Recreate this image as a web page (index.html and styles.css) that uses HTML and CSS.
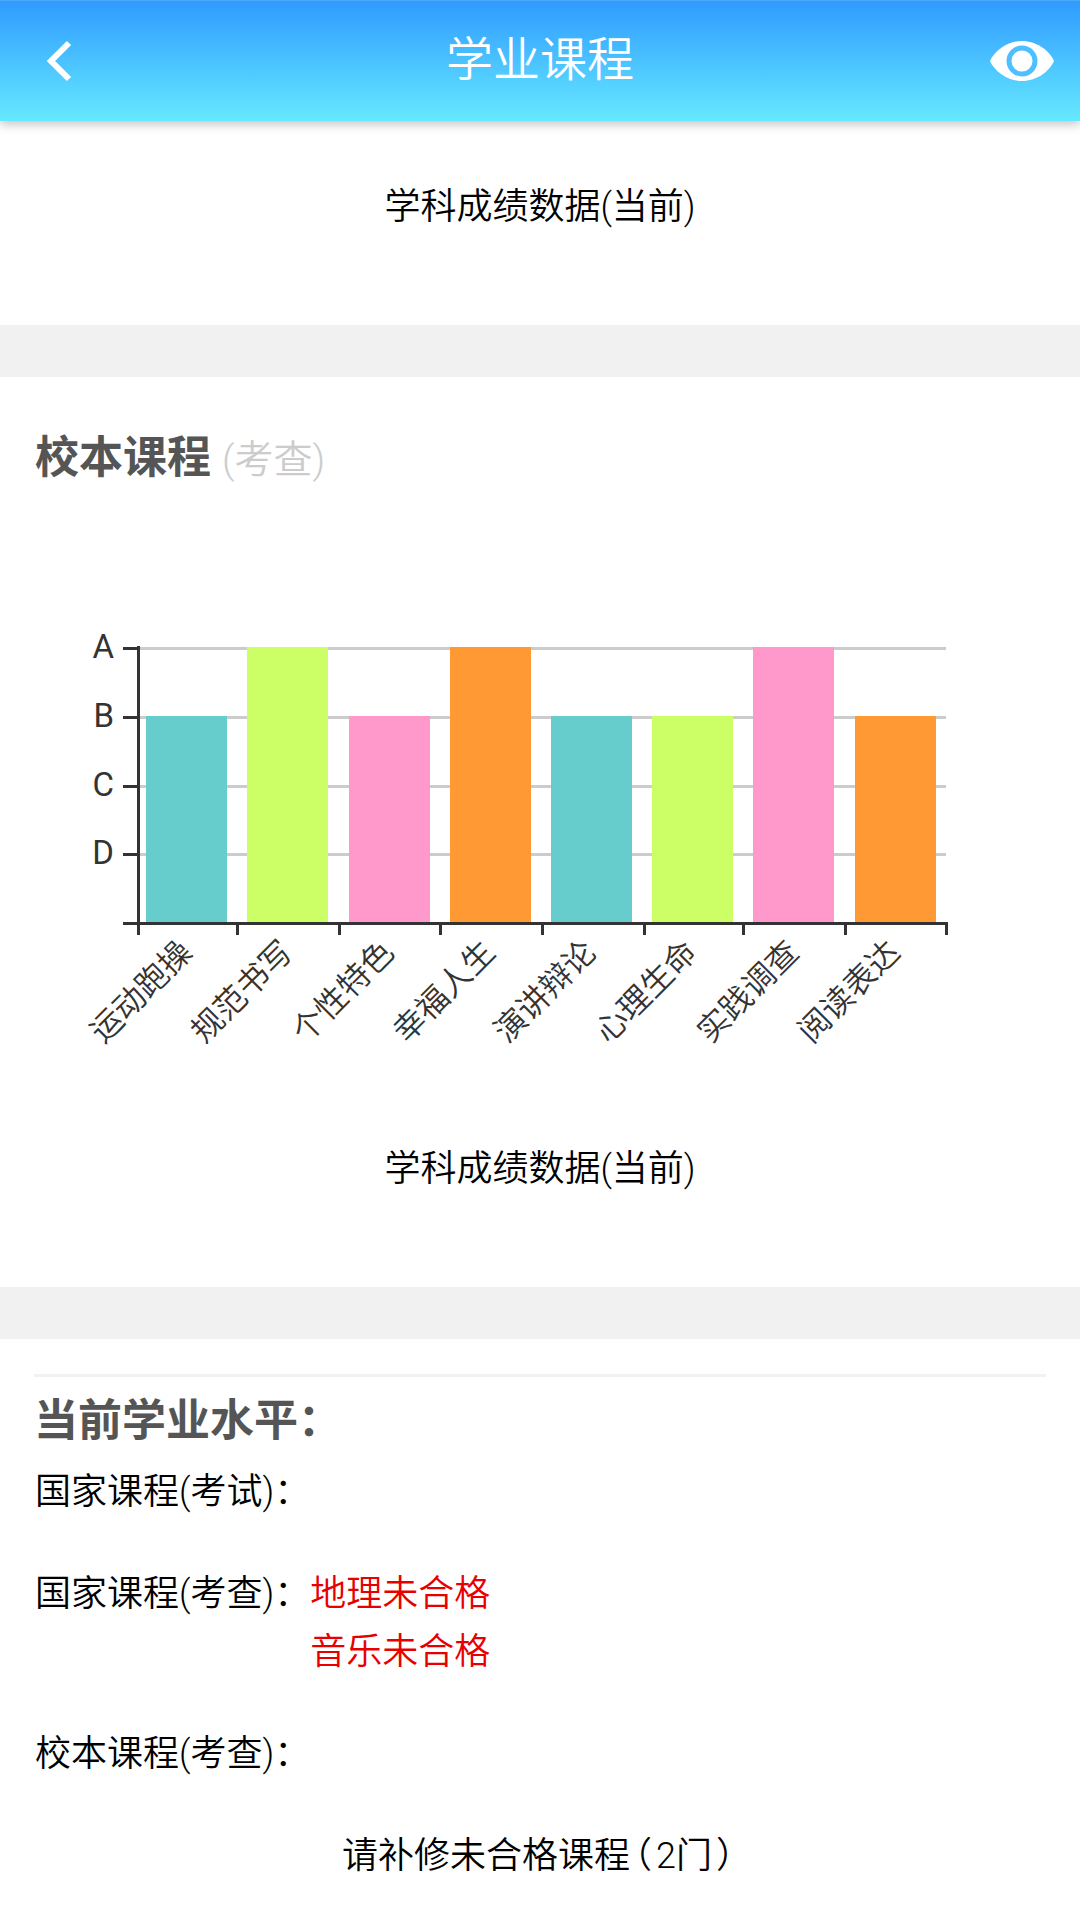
FILE: index.html
```html
<!DOCTYPE html>
<html lang="zh-CN">
<head>
    <meta charset="UTF-8">
    <meta name="viewport" content="width=device-width, initial-scale=1.0">
    <title>学业课程</title>
    <link rel="stylesheet" href="styles.css">
</head>
<body>

    <!-- 顶部导航 -->
    <header class="navbar">
        <button class="nav-btn back" type="button" aria-label="返回">
            <svg width="26" height="42" viewBox="0 0 26 42">
                <path d="M23 3L5 21l18 18" fill="none" stroke="#fff" stroke-width="6"/>
            </svg>
        </button>
        <h1>学业课程</h1>
        <button class="nav-btn eye" type="button" aria-label="查看">
            <svg width="64" height="40" viewBox="0 0 64 40">
                <path d="M0 20C5 9 18 0 32 0s27 9 32 20c-5 11-18 20-32 20S5 31 0 20z" fill="#fff"/>
                <circle cx="32" cy="20" r="13" fill="none" stroke="#4fc0ff" stroke-width="5"/>
            </svg>
        </button>
    </header>

    <section class="card">
        <p class="caption">学科成绩数据(当前)</p>
    </section>

    <!-- 校本课程 -->
    <section class="card">
        <h2 class="card-title">校本课程 <small>(考查)</small></h2>
        <svg class="chart" viewBox="0 0 1080 594" role="img" aria-label="校本课程成绩">
            <g class="grid">
                <rect x="138" y="158" width="808" height="3"/>
                <rect x="138" y="227" width="808" height="3"/>
                <rect x="138" y="296" width="808" height="3"/>
                <rect x="138" y="364" width="808" height="3"/>
            </g>
            <g class="bars">
                <rect class="teal" x="146" y="227" width="81" height="207"/>
                <rect class="lime" x="247" y="158" width="81" height="276"/>
                <rect class="pink" x="349" y="227" width="81" height="207"/>
                <rect class="orange" x="450" y="158" width="81" height="276"/>
                <rect class="teal" x="551" y="227" width="81" height="207"/>
                <rect class="lime" x="652" y="227" width="81" height="207"/>
                <rect class="pink" x="753" y="158" width="81" height="276"/>
                <rect class="orange" x="855" y="227" width="81" height="207"/>
            </g>
            <g class="axis">
                <rect x="137" y="157" width="3" height="289"/>
                <rect x="123" y="433" width="825" height="3"/>
                <rect x="123" y="158" width="14" height="3"/>
                <rect x="123" y="227" width="14" height="3"/>
                <rect x="123" y="296" width="14" height="3"/>
                <rect x="123" y="364" width="14" height="3"/>
                <rect x="236" y="435" width="3" height="11"/>
                <rect x="338" y="435" width="3" height="11"/>
                <rect x="439" y="435" width="3" height="11"/>
                <rect x="541" y="435" width="3" height="11"/>
                <rect x="643" y="435" width="3" height="11"/>
                <rect x="742" y="435" width="3" height="11"/>
                <rect x="844" y="435" width="3" height="11"/>
                <rect x="945" y="435" width="3" height="11"/>
            </g>
            <g class="y-labels">
                <text x="114" y="169">A</text>
                <text x="114" y="238">B</text>
                <text x="114" y="307">C</text>
                <text x="114" y="375">D</text>
            </g>
            <g class="x-labels">
                <text transform="translate(194 465) rotate(-45)">运动跑操</text>
                <text transform="translate(295 465) rotate(-45)">规范书写</text>
                <text transform="translate(396 465) rotate(-45)">个性特色</text>
                <text transform="translate(497 465) rotate(-45)">幸福人生</text>
                <text transform="translate(598 465) rotate(-45)">演讲辩论</text>
                <text transform="translate(699 465) rotate(-45)">心理生命</text>
                <text transform="translate(801 465) rotate(-45)">实践调查</text>
                <text transform="translate(902 465) rotate(-45)">阅读表达</text>
            </g>
        </svg>
        <p class="caption">学科成绩数据(当前)</p>
    </section>

    <!-- 当前学业水平 -->
    <section class="level">
        <h2>当前学业水平：</h2>
        <dl>
            <div class="row">
                <dt>国家课程(考试)：</dt>
            </div>
            <div class="row">
                <dt>国家课程(考查)：</dt>
                <dd>地理未合格<br>音乐未合格</dd>
            </div>
            <div class="row">
                <dt>校本课程(考查)：</dt>
            </div>
        </dl>
        <p class="notice">请补修未合格课程<span class="paren">（</span>2门<span class="paren">）</span></p>
    </section>

</body>
</html>
```
FILE: styles.css
```css
* {
    box-sizing: border-box;
}
body {
    margin: 0;
    background: #fff;
    color: #000;
    font-family: Roboto, "Noto Sans CJK SC", sans-serif;
    font-size: 36px;
    font-weight: 350;
}
h1, h2, p, dl, dd {
    margin: 0;
}

/* 顶部导航 */
.navbar {
    display: flex;
    justify-content: space-between;
    align-items: center;
    height: 121px;
    padding: 0 26px 0 46px;
    border-top: 1px solid #4ba9fa;
    background: linear-gradient(#2f9bff, #66e9ff);
    box-shadow: 0 3px 10px rgba(0, 0, 0, 0.25);
}
.navbar h1 {
    color: #fff;
    font-size: 47px;
    font-weight: 350;
    line-height: 60px;
    padding-bottom: 2px;
}
.nav-btn {
    display: flex;
    width: 64px;
    padding: 0;
    border: none;
    background: none;
    cursor: pointer;
}
.navbar .back {
    width: 44px;
}

/* 卡片 */
.card {
    border-bottom: 52px solid #f1f1f1;
}
.caption {
    padding: 62px 0 94px;
    line-height: 48px;
    text-align: center;
}
.card-title {
    padding: 52px 35px 0;
    color: #555;
    font-size: 44px;
    font-weight: 700;
    line-height: 58px;
}
.card-title small {
    color: #ccc;
    font-size: 39px;
    font-weight: 350;
}

/* 图表 */
.chart {
    display: block;
    width: 100%;
}
.chart text {
    fill: #333;
    font-size: 33px;
    text-anchor: end;
}
.chart .y-labels text {
    font-weight: 400;
}
.chart .x-labels text {
    font-size: 32px;
}
.grid {
    fill: #ccc;
}
.axis {
    fill: #333;
}
.teal {
    fill: #66cccc;
}
.lime {
    fill: #ccff66;
}
.pink {
    fill: #ff99cc;
}
.orange {
    fill: #ff9933;
}

/* 学业水平 */
.level {
    padding: 35px 34px;
}
.level h2 {
    padding-top: 14px;
    border-top: 3px solid #f1f1f1;
    color: #555;
    font-size: 44px;
    font-weight: 700;
    line-height: 60px;
}
.level dl {
    padding: 12px 1px 0;
}
.row {
    display: flex;
    margin-bottom: 44px;
    line-height: 58px;
}
.row dd {
    color: #e80000;
}
.notice {
    line-height: 58px;
    text-align: center;
}
.paren {
    padding: 0 4px;
    font-feature-settings: "halt";
}
```
